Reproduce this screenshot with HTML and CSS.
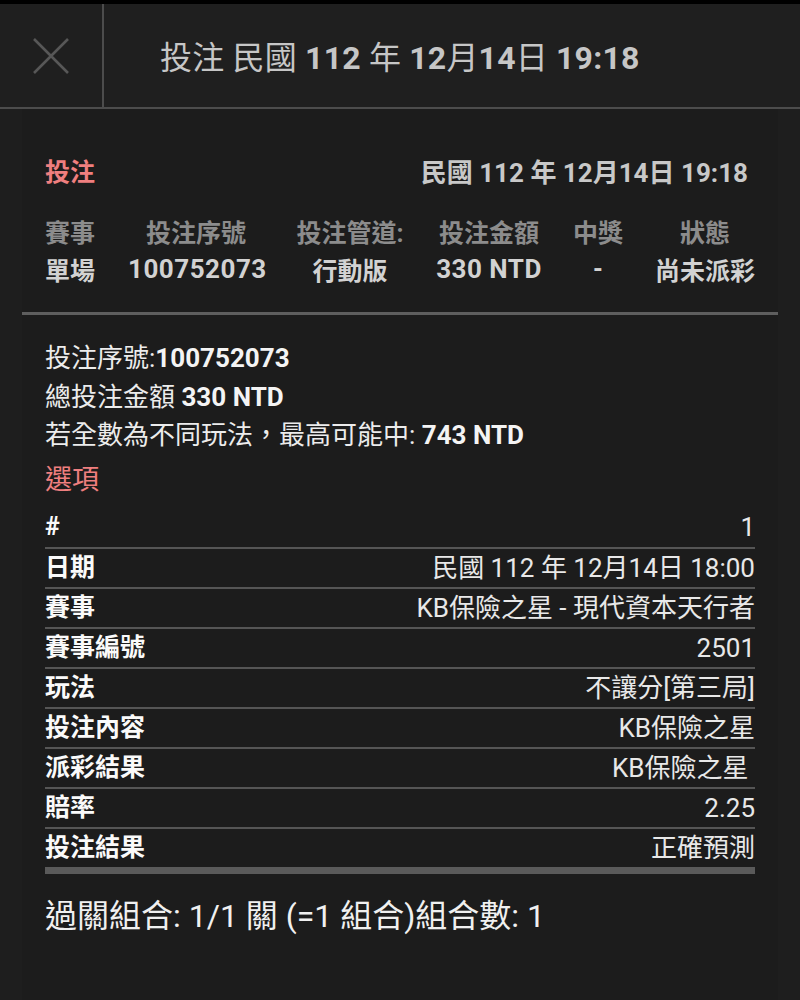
FILE: index.html
```html
<!DOCTYPE html>
<html lang="zh-Hant">
<head>
  <meta charset="UTF-8" />
  <meta name="viewport" content="width=device-width, initial-scale=1" />
  <title>投注明細</title>
  <link rel="stylesheet" href="styles.css">
</head>
<body>
  <header class="topbar">
    <button class="close-btn" title="關閉">
      <svg width="36" height="36" viewBox="0 0 36 36">
        <path d="M1 1 L35 35 M35 1 L1 35" stroke="#575757" stroke-width="2.6" fill="none" />
      </svg>
    </button>
    <h1 class="topbar-title">投注 民國 <b>112</b> 年 <b>12</b>月<b>14</b>日 <b>19:18</b></h1>
  </header>

  <main class="sheet">
    <section class="summary">
      <div class="summary-head">
        <span class="red-title">投注</span>
        <span class="summary-date">民國 112 年 12月14日 19:18</span>
      </div>
      <div class="summary-grid">
        <span class="col-head">賽事</span>
        <span class="col-head">投注序號</span>
        <span class="col-head">投注管道:</span>
        <span class="col-head">投注金額</span>
        <span class="col-head">中獎</span>
        <span class="col-head">狀態</span>
        <span class="col-val">單場</span>
        <span class="col-val num">100752073</span>
        <span class="col-val">行動版</span>
        <span class="col-val num">330 NTD</span>
        <span class="col-val">-</span>
        <span class="col-val">尚未派彩</span>
      </div>
    </section>

    <section class="detail">
      <p class="info-line">投注序號:<b>100752073</b></p>
      <p class="info-line">總投注金額 <b>330 NTD</b></p>
      <p class="info-line">若全數為不同玩法，最高可能中: <b>743 NTD</b></p>
      <h2 class="red-title options-title">選項</h2>

      <table class="options">
        <tr><th>#</th><td>1</td></tr>
        <tr><th>日期</th><td>民國 112 年 12月14日 18:00</td></tr>
        <tr><th>賽事</th><td>KB保險之星 - 現代資本天行者</td></tr>
        <tr><th>賽事編號</th><td>2501</td></tr>
        <tr><th>玩法</th><td>不讓分[第三局]</td></tr>
        <tr><th>投注內容</th><td>KB保險之星</td></tr>
        <tr><th>派彩結果</th><td>KB保險之星&nbsp;</td></tr>
        <tr><th>賠率</th><td>2.25</td></tr>
        <tr><th>投注結果</th><td>正確預測</td></tr>
      </table>

      <p class="combo">過關組合: 1/1 關 (=1 組合)組合數: 1</p>
    </section>
  </main>
</body>
</html>
```

FILE: styles.css
```css
* {
  box-sizing: border-box;
}
body {
  margin: 0;
  padding: 0;
  background: #1e1e1e;
  color: #e8e8e8;
  font-family: Roboto, "Noto Sans CJK TC", sans-serif;
  min-height: 1000px;
}

/* ---- top bar ---- */
.topbar {
  display: flex;
  align-items: center;
  height: 109px;
  border-top: 4px solid #000;
  border-bottom: 2px solid #4c4c4c;
  background: #1f1f1f;
}
.close-btn {
  width: 104px;
  height: 100%;
  padding: 0;
  background: none;
  border: none;
  border-right: 2px solid #4c4c4c;
  display: flex;
  justify-content: center;
  align-items: center;
  cursor: pointer;
}
.topbar-title {
  margin: 0 0 2px 56px;
  font-size: 32px;
  font-weight: 400;
  color: #c6c6c6;
  letter-spacing: 0.2px;
}
.topbar-title b {
  font-weight: 700;
}

/* ---- sheet ---- */
.sheet {
  margin: 0 22px;
  background: #1c1c1c;
  min-height: 891px;
}
.red-title {
  color: #ef7f7f;
  font-weight: 700;
}

.summary {
  padding: 44px 23px 24px;
  border-bottom: 3px solid #5e5e5e;
}
.summary-head {
  display: flex;
  justify-content: space-between;
  align-items: center;
  height: 34px;
  font-size: 25px;
  padding-right: 7px;
}
.summary-date {
  font-size: 26px;
  font-weight: 700;
  color: #c8c8c8;
}
.summary-grid {
  margin-top: 25px;
  display: grid;
  grid-template-columns: 83px 136px 172px 106px 112px 102px;
  grid-auto-rows: 38px;
  align-items: center;
  font-size: 25px;
  font-weight: 700;
  text-align: center;
}
.summary-grid span:nth-child(6n+1) {
  text-align: left;
}
.col-head {
  color: #8c8c8c;
}
.col-val {
  color: #d2d2d2;
}
.col-val.num {
  font-size: 26px;
  letter-spacing: 0.5px;
}

.detail {
  padding: 24px 23px 0;
}
.info-line {
  margin: 0;
  font-size: 26px;
  line-height: 38.5px;
  color: #ececec;
}
.info-line b {
  font-weight: 700;
  color: #f4f4f4;
}
.options-title {
  margin: 5px 0 8px;
  font-size: 27px;
  line-height: 40px;
  font-weight: 400;
}

.options {
  width: 100%;
  border-collapse: collapse;
  border-bottom: 7px solid #5a5a5a;
}
.options tr {
  height: 40px;
  border-bottom: 2px solid #555;
}
.options tr:last-child {
  height: 43px;
  border-bottom: none;
}
.options th,
.options td {
  padding: 0;
  line-height: 36px;
}
.options th {
  text-align: left;
  font-size: 25px;
  font-weight: 700;
  color: #fafafa;
}
.options td {
  text-align: right;
  font-size: 26px;
  color: #e8e8e8;
  white-space: pre;
}

.combo {
  margin: 22px 0 0;
  font-size: 32px;
  line-height: 40px;
  color: #f0f0f0;
}
```
